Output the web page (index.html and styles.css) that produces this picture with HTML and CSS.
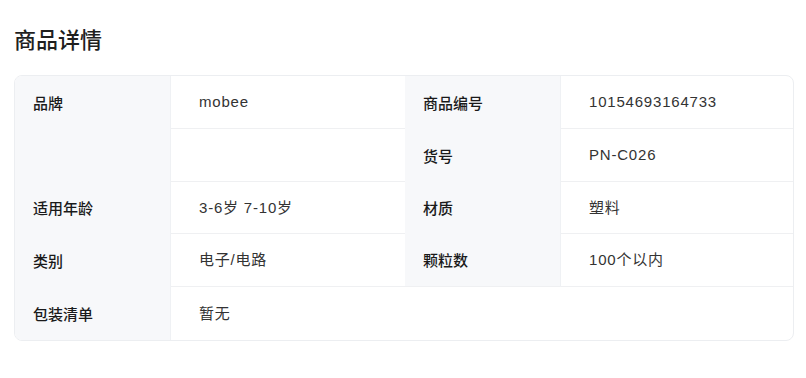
FILE: index.html
```html
<!DOCTYPE html>
<html lang="zh-CN">
<head>
<meta charset="utf-8">
<title>商品详情</title>
<link rel="stylesheet" href="styles.css">
</head>
<body>
<div class="page">
  <h2 class="title">商品详情</h2>
  <div class="spec">
    <div class="cell label">品牌</div>
    <div class="cell value">mobee</div>
    <div class="cell label">商品编号</div>
    <div class="cell value">10154693164733</div>

    <div class="cell label"></div>
    <div class="cell value"></div>
    <div class="cell label">货号</div>
    <div class="cell value">PN-C026</div>

    <div class="cell label">适用年龄</div>
    <div class="cell value">3-6岁 7-10岁</div>
    <div class="cell label">材质</div>
    <div class="cell value">塑料</div>

    <div class="cell label">类别</div>
    <div class="cell value">电子/电路</div>
    <div class="cell label label-closed">颗粒数</div>
    <div class="cell value">100个以内</div>

    <div class="cell label">包装清单</div>
    <div class="cell value value-wide">暂无</div>
  </div>
</div>
</body>
</html>
```

FILE: styles.css
```css
* { box-sizing: border-box; }
html, body { margin: 0; padding: 0; background: #ffffff; }
body {
  font-family: "Liberation Sans", "Noto Sans CJK SC", sans-serif;
  color: #333333;
}
.page {
  padding: 23px 12px 0 14px;
}
.title {
  margin: 0 0 22px 0;
  font-size: 22px;
  line-height: 30px;
  font-weight: 500;
  color: #1f1f1f;
  font-family: "Noto Sans CJK SC", sans-serif;
}
.spec {
  display: grid;
  grid-template-columns: 156px 234px 156px 1fr;
  grid-template-rows: 53px 53px 52px 53px 53px;
  border: 1px solid #eceef1;
  border-radius: 8px;
  overflow: hidden;
  width: 780px;
}
.cell {
  display: flex;
  align-items: center;
  font-size: 15px;
  line-height: 20px;
}
.label {
  background: #f7f8fa;
  padding-left: 18px;
  border-right: 1px solid #eff1f4;
  color: #1a1a1a;
  font-weight: 500;
  font-family: "Noto Sans CJK SC", sans-serif;
}
.value {
  padding-left: 28px;
  border-bottom: 1px solid #eff0f2;
  color: #333333;
  letter-spacing: 0.8px;
}
.label-closed { border-bottom: 1px solid #eff0f2; }
.value-wide {
  grid-column: span 3;
  border-bottom: none;
}
```
